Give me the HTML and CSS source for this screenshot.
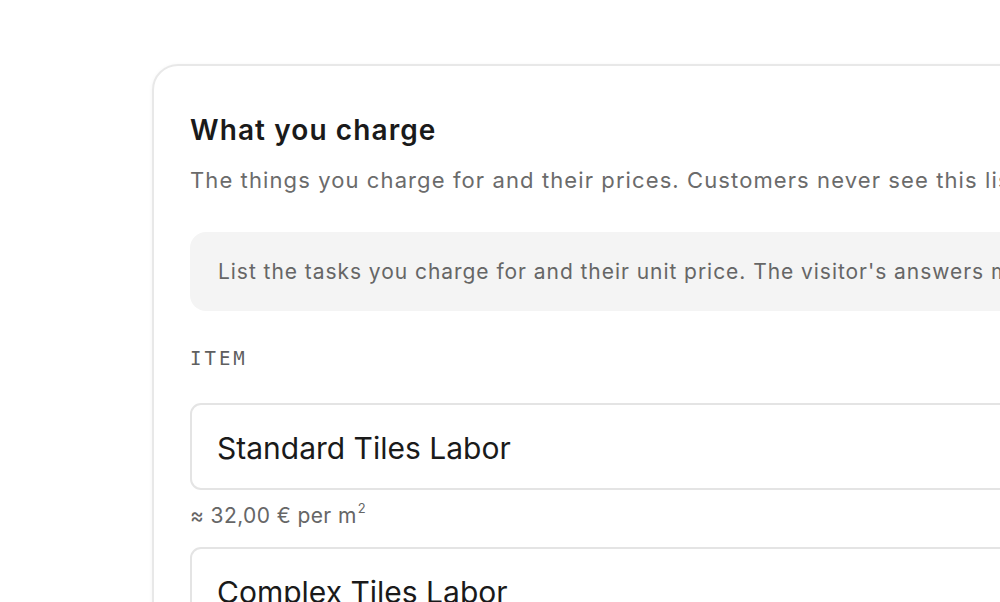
FILE: index.html
```html
<!DOCTYPE html>
<html lang="en">
<head>
<meta charset="utf-8">
<title>What you charge</title>
<link rel="stylesheet" href="styles.css">
</head>
<body>
<main class="page">
  <section class="card">
    <h2 class="card-title">What you charge</h2>
    <p class="card-sub">The things you charge for and their prices. Customers never see this list directly.</p>
    <div class="note">List the tasks you charge for and their unit price. The visitor's answers must map to one of these items.</div>
    <div class="col-label">ITEM</div>
    <div class="item">
      <div class="input">Standard Tiles Labor</div>
      <div class="hint">≈ 32,00 € per m<sup>2</sup></div>
    </div>
    <div class="item">
      <div class="input">Complex Tiles Labor</div>
      <div class="hint">≈ 45,00 € per m<sup>2</sup></div>
    </div>
  </section>
</main>
</body>
</html>
```
FILE: styles.css
```css
html, body {
  margin: 0;
  padding: 0;
  background: #ffffff;
  overflow: hidden;
}
body {
  font-family: Inter, "Noto Sans", sans-serif;
  color: #1a1a1a;
}
.page {
  padding: 64px 0 0 152px;
  height: 602px;
  box-sizing: border-box;
  overflow: hidden;
}
.card {
  width: 1100px;
  border: 2px solid #e8e8e8;
  border-radius: 26px;
  padding: 47px 36px 40px 36px;
  box-shadow: 0 1px 4px rgba(0, 0, 0, 0.05);
  white-space: nowrap;
}
.card-title {
  margin: 0;
  font-size: 28px;
  line-height: 34px;
  font-weight: 600;
  letter-spacing: 1.1px;
  color: #1a1a1a;
}
.card-sub {
  margin: 18px 0 0 0;
  font-size: 22px;
  line-height: 30px;
  letter-spacing: 1.1px;
  color: #6b6b6b;
}
.note {
  margin-top: 37px;
  background: #f4f4f4;
  border-radius: 16px;
  padding: 26px 28px 25px 28px;
  font-size: 21px;
  line-height: 28px;
  letter-spacing: 0.95px;
  color: #666666;
}
.col-label {
  margin-top: 35px;
  font-family: "DejaVu Sans Mono", monospace;
  font-size: 19px;
  line-height: 24px;
  letter-spacing: 3px;
  color: #5f5f5f;
}
.item {
  margin-top: 33px;
  display: flex;
  flex-direction: column;
  gap: 14px;
}
.item + .item {
  margin-top: 19px;
}
.input {
  border: 2px solid #e4e4e4;
  border-radius: 11px;
  height: 87px;
  box-sizing: border-box;
  padding: 3px 25px 0 25px;
  display: flex;
  align-items: center;
  font-size: 30px;
  line-height: 36px;
  color: #1a1a1a;
}
.hint {
  font-size: 21px;
  line-height: 24px;
  letter-spacing: 0.4px;
  color: #666666;
}
.hint sup {
  font-size: 13px;
  vertical-align: 10px;
  line-height: 0;
  margin-left: 1px;
}
```
